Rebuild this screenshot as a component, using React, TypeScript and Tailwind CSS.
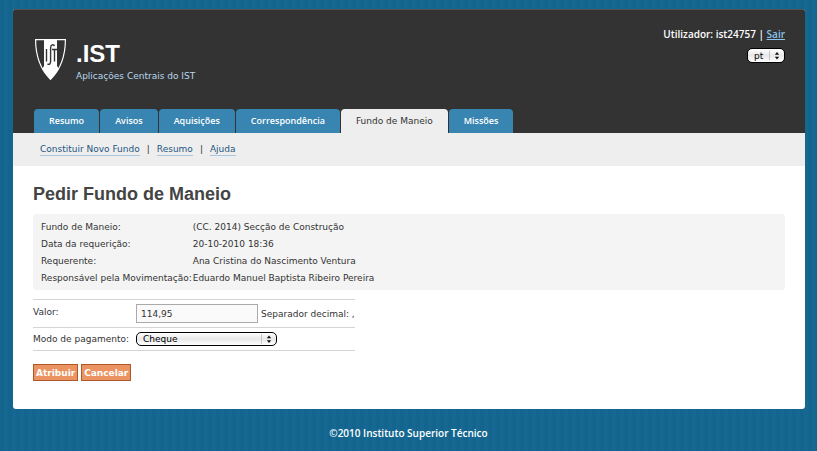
import type { ReactNode } from "react";

const tabs = ["Resumo", "Avisos", "Aquisições", "Correspondência", "Fundo de Maneio", "Missões"];
const activeTab = "Fundo de Maneio";
const subLinks = ["Constituir Novo Fundo", "Resumo", "Ajuda"];

const details = [
  ["Fundo de Maneio:", "(CC. 2014) Secção de Construção"],
  ["Data da requerição:", "20-10-2010 18:36"],
  ["Requerente:", "Ana Cristina do Nascimento Ventura"],
  ["Responsável pela Movimentação:", "Eduardo Manuel Baptista Ribeiro Pereira"],
];

function Crest() {
  return (
    <svg viewBox="0 0 31 41" className="h-[41px] w-[31px]" aria-hidden="true">
      <path d="M.6 .6H30.400C30.400 16 26 30 15.500 40.400C5 30 .6 16 .6 .6Z" fill="#333" stroke="#fff" strokeWidth="1.200" />
      <path d="M9 .6H22V27L24 30L15.500 40.400L7 30L9 27Z" fill="#fff" />
      <g fill="none" stroke="#333" strokeWidth="1.400">
        <path d="M11.500 10V22.500" />
        <path d="M19.500 7C18.500 5 15.600 5.500 15.600 9V22C15.600 25 14.500 26 12.500 25" />
        <path d="M17 10.500H22M19.500 10.500V22.500" />
      </g>
    </svg>
  );
}

function MacSelect({
  id,
  label,
  value,
  className,
}: {
  id: string;
  label?: string;
  value: string;
  className: string;
}) {
  return (
    <div className={`relative ${className}`}>
      <select
        id={id}
        aria-label={label}
        defaultValue={value}
        className="block h-full w-full appearance-none rounded-[5px] border border-black bg-linear-to-b from-white via-[#e8e8e8] to-white pl-1.5 text-[9px] leading-3 text-black"
      >
        <option>{value}</option>
      </select>
      <svg
        viewBox="0 0 16 12"
        className="pointer-events-none absolute inset-y-0 right-0 h-full w-4"
        aria-hidden="true"
      >
        <path d="M.5 1V11" stroke="#bbb" strokeWidth=".8" />
        <path d="M5.800 5.200L8 2.400L10.200 5.200ZM5.800 7.200L8 10L10.200 7.200Z" fill="#111" />
      </svg>
    </div>
  );
}

function ActionButton({ children }: { children: ReactNode }) {
  return (
    <button
      type="button"
      className="h-[17px] border border-[#ad5828] bg-[#eb9462] px-0.5 text-[9px] leading-3 font-bold text-white"
    >
      {children}
    </button>
  );
}

export default function App() {
  return (
    <div className="min-h-screen bg-[#13658e] bg-[repeating-linear-gradient(90deg,#13658e_0_4px,#166791_4px_8px)] px-3 pt-[9px] font-['DejaVu_Sans',Verdana,sans-serif] text-[9px] leading-3 text-[#333]">
      <div className="ml-px overflow-hidden rounded-[3px] bg-white">
        <header className="border-t border-[#555] bg-[#333] px-5">
          <div className="flex h-[99px] items-start justify-between">
            <div className="flex items-start gap-2.5 pt-[29px] pl-0.5">
              <Crest />
              <div className="pt-[3px]">
                <h1 className="font-['Liberation_Sans',Arial,sans-serif] text-2xl leading-6 font-bold text-white">
                  .IST
                </h1>
                <p className="mt-1 text-[#b8d8ee]">Aplicações Centrais do IST</p>
              </div>
            </div>
            <div className="flex flex-col items-end gap-2 pt-[18px]">
              <p className="font-['Open_Sans',Verdana,sans-serif] text-[10px] font-semibold text-white">
                Utilizador: ist24757 |{" "}
                <a href="#sair" className="text-[#8cc6ee] underline">
                  Sair
                </a>
              </p>
              <MacSelect id="idioma" label="Idioma" value="pt" className="h-[15px] w-[38px]" />
            </div>
          </div>
          <nav className="flex gap-px pl-px">
            {tabs.map((tab) => (
              <a
                key={tab}
                href="#tab"
                className={
                  tab === activeTab
                    ? "rounded-t bg-[#eee] px-[15px] py-1.5 text-[#333]"
                    : "rounded-t bg-[#3885b1] px-[15px] py-1.5 font-['Open_Sans',Verdana,sans-serif] font-semibold text-white"
                }
              >
                {tab}
              </a>
            ))}
          </nav>
        </header>

        <nav className="flex h-[33px] items-center gap-[7px] bg-[#eee] px-[27px]">
          {subLinks.map((link, i) => (
            <span key={link} className="flex gap-[7px]">
              {i > 0 && <span>|</span>}
              <a href="#link" className="border-b border-[#a9c6dc] text-[#1f5582]">
                {link}
              </a>
            </span>
          ))}
        </nav>

        <main className="px-5 pt-4 pb-7">
          <h2 className="font-['Liberation_Sans',Arial,sans-serif] text-lg leading-6 font-bold text-[#444]">
            Pedir Fundo de Maneio
          </h2>

          <div className="mt-2 rounded-[3px] bg-[#f4f4f4] px-2 py-1">
            <table>
              <tbody>
                {details.map(([name, value]) => (
                  <tr key={name} className="h-[17px]">
                    <th scope="row" className="p-0 pr-px text-left font-normal whitespace-nowrap">
                      {name}
                    </th>
                    <td className="p-0 whitespace-nowrap">{value}</td>
                  </tr>
                ))}
              </tbody>
            </table>
          </div>

          <form>
            <div className="mt-[9px] w-fit border-b border-[#d4d4d4]">
              <div className="flex h-7 items-start border-t border-[#d4d4d4] pt-1">
                <label htmlFor="valor" className="w-[103px] pt-0.5">
                  Valor:
                </label>
                <input
                  id="valor"
                  defaultValue="114,95"
                  className="h-[19px] w-[122px] border border-[#aaa] bg-[#fafafa] px-1 text-[9px]"
                />
                <span className="pt-1 pl-[3px]">Separador decimal: ,</span>
              </div>
              <div className="flex h-[23px] items-center border-t border-[#d4d4d4]">
                <label htmlFor="modo" className="w-[103px] whitespace-nowrap">
                  Modo de pagamento:
                </label>
                <MacSelect id="modo" value="Cheque" className="h-3.5 w-[141px]" />
              </div>
            </div>
            <div className="mt-[13px] flex gap-[3px]">
              <ActionButton>Atribuir</ActionButton>
              <ActionButton>Cancelar</ActionButton>
            </div>
          </form>
        </main>
      </div>
      <footer className="py-[18px] text-center font-['Open_Sans',Verdana,sans-serif] text-[10px] font-semibold text-white">
        ©2010 Instituto Superior Técnico
      </footer>
    </div>
  );
}
